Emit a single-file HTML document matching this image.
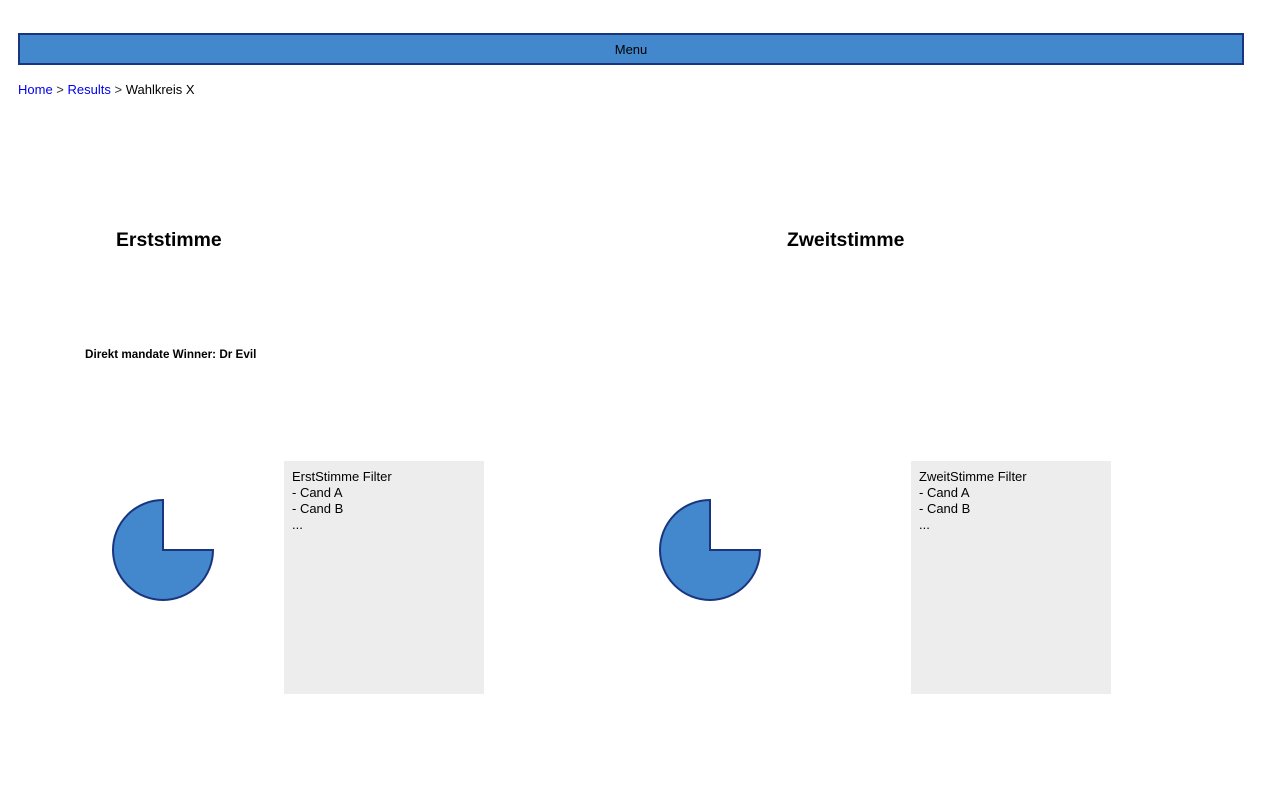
<!DOCTYPE html>
<html><head><meta charset="utf-8"><style>
body{margin:0;background:#fff;font-family:"Liberation Sans",Arial,sans-serif;width:1280px;height:800px;position:relative;overflow:hidden}
.a{position:absolute}
.menu{left:18px;top:33px;width:1222px;height:28px;background:#4387cc;border:2px solid #1a3580;font-size:13px;text-align:center;line-height:30px;color:#000}
.bc{left:18px;top:82px;font-size:13px;color:#333}
.bc a{color:#0000ee;text-decoration:none}
h2{margin:0;font-size:19.4px;font-weight:bold}
.box{background:#ededed;width:192px;height:225px;padding:8px 0 0 8px;font-size:13px;line-height:16px;color:#000}
</style></head><body>
<div class="a menu">Menu</div>
<div class="a bc"><a>Home</a> &gt; <a>Results</a> &gt; <span style="color:#000">Wahlkreis X</span></div>
<h2 class="a" style="left:116px;top:229px">Erststimme</h2>
<h2 class="a" style="left:787px;top:229px">Zweitstimme</h2>
<div class="a" style="left:85px;top:348px;font-size:11.7px;font-weight:bold">Direkt mandate Winner: Dr Evil</div>
<svg class="a" style="left:0;top:0" width="1280" height="800">
<path d="M163 550 L213 550 A50 50 0 1 1 163 500 Z" fill="#4387cc" stroke="#1a3580" stroke-width="2"/>
<path d="M710 550 L760 550 A50 50 0 1 1 710 500 Z" fill="#4387cc" stroke="#1a3580" stroke-width="2"/>
</svg>
<div class="a box" style="left:284px;top:461px">ErstStimme Filter<br>- Cand A<br>- Cand B<br>...</div>
<div class="a box" style="left:911px;top:461px">ZweitStimme Filter<br>- Cand A<br>- Cand B<br>...</div>
</body></html>
